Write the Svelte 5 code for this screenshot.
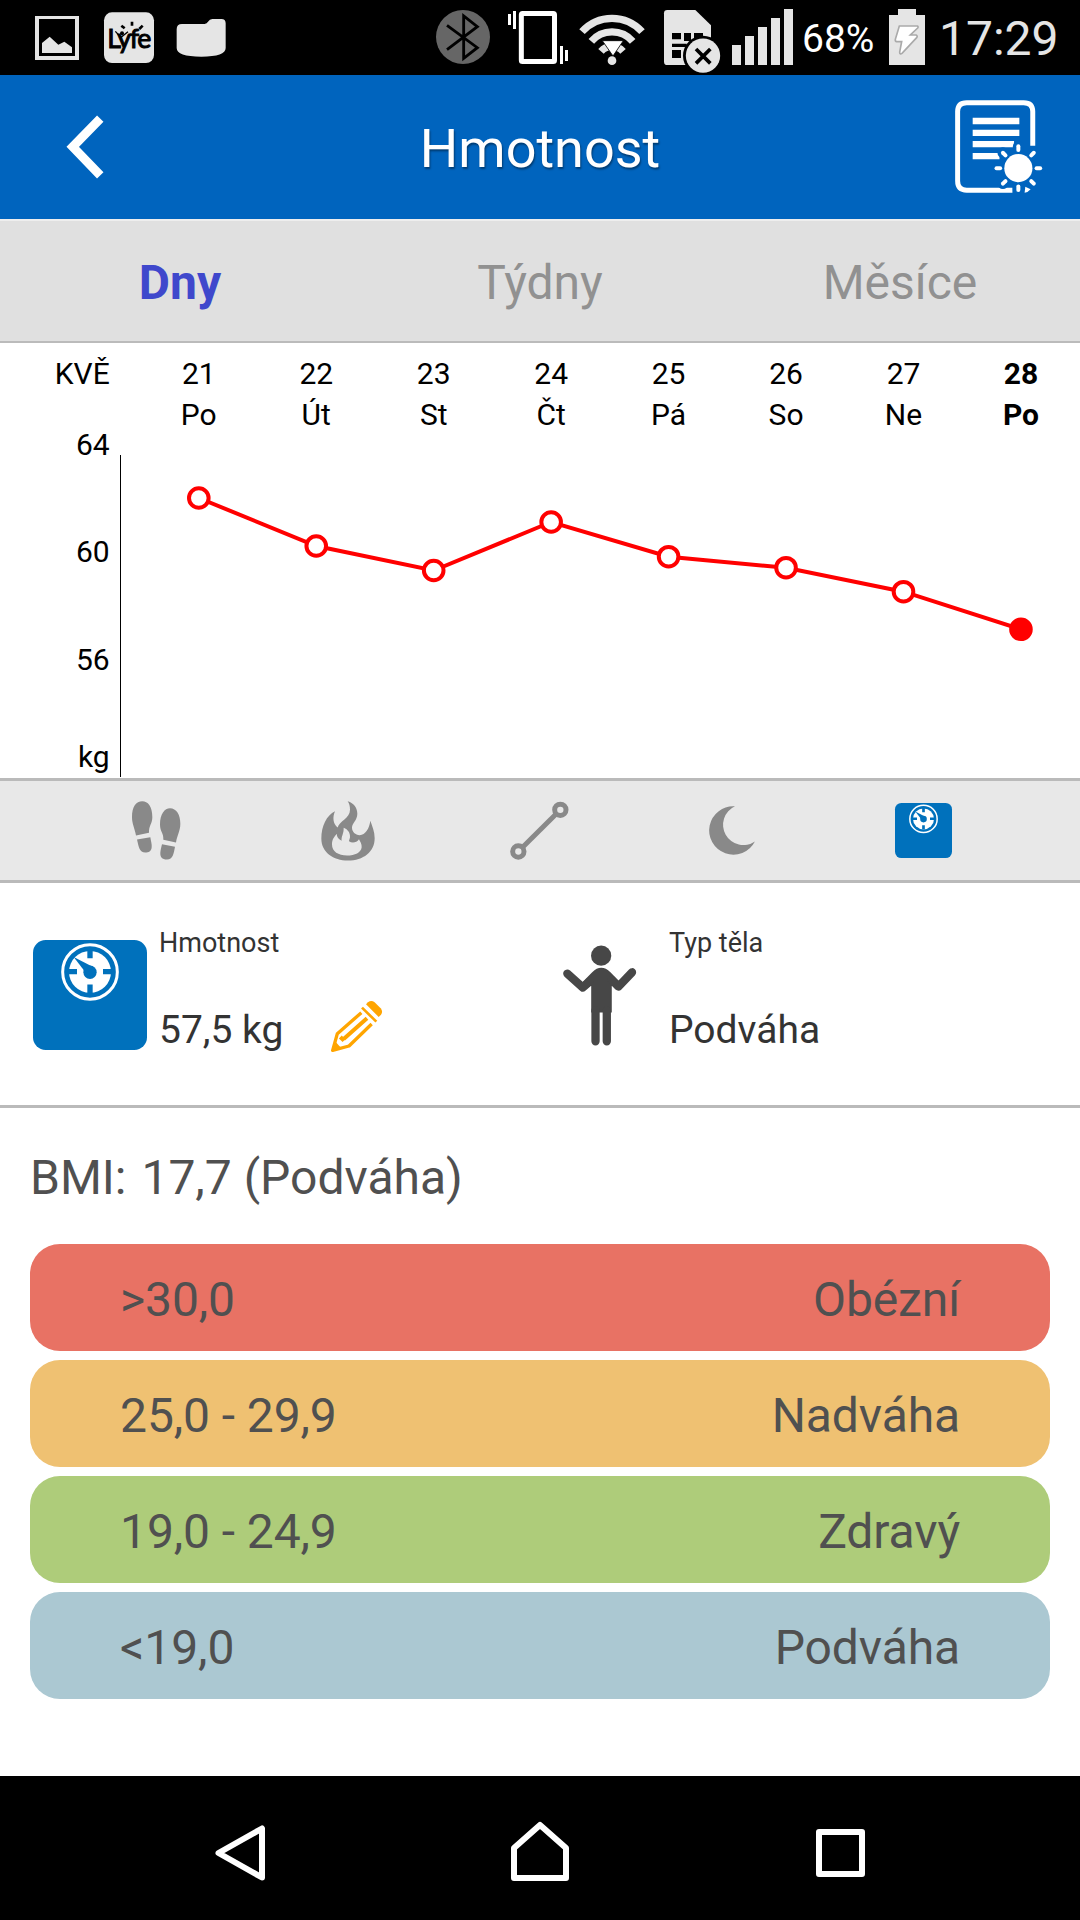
<script>
  const tabs = ['Dny', 'Týdny', 'Měsíce'];
  let activeTab = $state('Dny');

  const days = [
    { num: 21, name: 'Po', y: 155 },
    { num: 22, name: 'Út', y: 203 },
    { num: 23, name: 'St', y: 227.5 },
    { num: 24, name: 'Čt', y: 179 },
    { num: 25, name: 'Pá', y: 213.7 },
    { num: 26, name: 'So', y: 224.7 },
    { num: 27, name: 'Ne', y: 248.7 },
    { num: 28, name: 'Po', y: 286.3 }
  ];

  const axis = [
    { label: 'KVĚ', y: 41 },
    { label: '64', y: 112 },
    { label: '60', y: 219 },
    { label: '56', y: 326.5 },
    { label: 'kg', y: 424 }
  ];

  const ranges = [
    { range: '>30,0', label: 'Obézní', cls: 'obese' },
    { range: '25,0 - 29,9', label: 'Nadváha', cls: 'over' },
    { range: '19,0 - 24,9', label: 'Zdravý', cls: 'healthy' },
    { range: '<19,0', label: 'Podváha', cls: 'under' }
  ];

  const dayX = (i) => 198.8 + i * 117.45;
  const line = days.map((d, i) => `${dayX(i)},${d.y}`).join(' ');
  const rays = [0, 45, 90, 135, 180, 225, 270, 315];
</script>

{#snippet scaleIcon(cls)}
  <svg class={cls} viewBox="0 0 342 331" preserveAspectRatio="none">
    <rect width="342" height="331" rx="38" fill="#0071bc" />
    <circle cx="171" cy="96" r="82" fill="none" stroke="#fff" stroke-width="9" />
    <circle cx="171" cy="96" r="63" fill="#fff" />
    <path d="M171 30V55M171 134V160M106 95H132M210 95H236" stroke="#0071bc" stroke-width="16" />
    <circle cx="171" cy="97" r="20" fill="#0071bc" />
    <path d="M122 51L182 82L160 101Z" fill="#0071bc" />
  </svg>
{/snippet}

<div class="screen">
  <div class="status">
    <svg class="status-left" viewBox="0 0 1260 225">
      <path d="M105 48H237V180H105ZM117 57V168H225V57Z" fill="#e5e5e5" fill-rule="evenodd" />
      <path d="M126 159V129L149 110L175 134L193 125L216 142V159Z" fill="#e5e5e5" />
      <rect x="312" y="37" width="150" height="152" rx="24" fill="#e5e5e5" />
      <text class="brand" x="322" y="143" textLength="132">Lyfe</text>
      <circle cx="366" cy="100" r="6" />
      <path d="M346 94L363 112L384 95" fill="none" stroke="#000" stroke-width="4" />
      <path d="M364 77L374 85M396 65V77M428 77L418 87" stroke="#000" stroke-width="8" />
      <path d="M546 72H614Q621 71 624 65Q629 57 637 57H664Q677 57 677 70V144Q677 170 604 170Q530 170 530 144V88Q530 72 546 72Z" fill="#e5e5e5" />
    </svg>
    <svg class="status-right" viewBox="0 0 1128 225">
      <circle cx="129" cy="111" r="81" fill="#666" />
      <path d="M81 149L172 80L131 48V175L172 143L81 76" fill="none" stroke="#000" stroke-width="8.5" />
      <rect x="304" y="40.500" width="99.500" height="144" rx="4" fill="none" stroke="#fff" stroke-width="15" />
      <path d="M268.500 42V75M283.500 33V87M424.500 138V192M439.500 150V183" stroke="#fff" stroke-width="9" />
      <g fill="none" stroke="#e5e5e5" stroke-width="22">
        <path d="M486 95A121 121 0 0 1 666 95" />
        <path d="M514 124A82 82 0 0 1 638 124" />
        <path d="M543 154A44 44 0 0 1 609 154" />
      </g>
      <path d="M547 122H610L579 168Z" fill="#fff" stroke="#000" stroke-width="2.5" />
      <circle cx="576" cy="182" r="13" fill="#e5e5e5" />
      <path d="M742 30H826L873 76V195H742Q732 195 732 185V40Q732 30 742 30Z" fill="#e5e5e5" />
      <path d="M756 99H783V118H756ZM792 99H813V123H792ZM822 99H849V118H822ZM756 131H800V141H756ZM756 150H783V174H756Z" />
      <circle cx="849" cy="167" r="60" />
      <circle cx="849" cy="167" r="51.500" fill="#e5e5e5" />
      <path d="M828 147L871 190M871 147L828 190" stroke="#000" stroke-width="11" />
      <path d="M936 135H963V195H936ZM975 108H1002V195H975ZM1014 81H1041V195H1014ZM1053 54H1080V195H1053ZM1092 27H1119V195H1092Z" fill="#e5e5e5" />
    </svg>
    <span class="percent">68%</span>
    <svg class="battery" viewBox="507 27 108 168">
      <path d="M534 27H588V45H615V195H507V45H534Z" fill="#e5e5e5" />
      <path d="M538 78H592Q596 80 593 84L571 105H588Q594 108 590 113L546 160Q539 165 539 156L545 125H530Q525 124 526 118Z" fill="#fff" stroke="#aaa" stroke-width="5" />
    </svg>
    <span class="time">17:29</span>
  </div>

  <header>
    <svg class="back" viewBox="200 348 111 187">
      <path d="M300 356L217 441L300 527" fill="none" stroke="#fff" stroke-width="27" />
    </svg>
    <h1>Hmotnost</h1>
    <svg class="report" viewBox="706 300 262 281">
      <path d="M940.500 438V335Q940.500 308 913 308H741Q713.500 308 713.500 335V545Q713.500 572.500 741 572.500H879" fill="none" stroke="#fff" stroke-width="15" />
      <path d="M759 363.500H900M759 399.500H900M759 433.500H884M759 469.500H840" stroke="#fff" stroke-width="19" />
      <path d="M918 562L934 570Q927 579 916 580Z" fill="#fff" />
      {#each rays as r}
        <path d="M897 450V440" transform="rotate({r} 897 506)" class="ray-gap" />
      {/each}
      <circle cx="897" cy="506" r="50" fill="#0064be" />
      {#each rays as r}
        <path d="M897 451V440" transform="rotate({r} 897 506)" class="ray" />
      {/each}
      <circle cx="897" cy="506" r="42.500" fill="#fff" />
    </svg>
  </header>

  <nav class="tabs">
    {#each tabs as tab}
      <button class:active={tab === activeTab} onclick={() => (activeTab = tab)}>{tab}</button>
    {/each}
  </nav>

  <svg class="chart" viewBox="0 0 1080 435">
    {#each axis as a}
      <text x="109.700" y={a.y} text-anchor="end">{a.label}</text>
    {/each}
    <path d="M120.500 112V434" stroke="#000" stroke-width="1" />
    <polyline points={line} fill="none" stroke="#f00" stroke-width="4" />
    {#each days as d, i}
      {@const last = i === days.length - 1}
      <text x={dayX(i)} y="41" text-anchor="middle" class:today={last}>{d.num}</text>
      <text x={dayX(i)} y="82" text-anchor="middle" class:today={last}>{d.name}</text>
      <circle cx={dayX(i)} cy={d.y} r="9.800" fill={last ? '#f00' : '#fff'} stroke="#f00" stroke-width="4" />
    {/each}
  </svg>

  <div class="metrics">
    <div class="metric">
      <svg class="icon" viewBox="78 91.500 180 180">
        <path d="M127 92C143 92 157 106 157 140C157 160 146 165 147 187L108 195C104 172 96 160 96 140C96 108 108 92 127 92Z" />
        <path d="M111 207L151 200C153 213 156 220 155 230C154 242 146 246 136 246C118 246 116 228 111 207Z" />
        <path d="M210 113C229 113 241 132 241 160C241 182 231 196 228 216L190 208C191 186 180 184 180 162C180 130 194 113 210 113Z" />
        <path d="M186 221L225 229C221 250 219 267 201 267C186 267 180 260 181 246C182 236 184 230 186 221Z" />
      </svg>
    </div>
    <div class="metric">
      <svg class="icon" viewBox="654 91.500 180 180">
        <path
          fill-rule="evenodd"
          d="M743 92C762 98 772 112 772 130C772 150 756 158 756 172C756 184 766 194 779 194C796 194 808 174 811 151C817 168 824 184 824 203C824 244 790 270 744 270C700 270 664 246 664 204C664 166 680 134 705 122C697 140 699 160 713 171C718 152 750 144 750 118C750 107 748 99 743 92ZM710 190C710 200 716 207 725 211C723 198 732 190 731 172C744 177 751 188 750 200C749 206 747 208 747 212C757 219 770 216 777 206C780 212 786 220 785 230C783 246 765 255 741 255C715 255 696 243 696 222C696 206 703 200 710 190Z"
        />
      </svg>
    </div>
    <div class="metric">
      <svg class="icon route" viewBox="1230 91.500 180 180">
        <circle cx="1381" cy="118" r="17" />
        <circle cx="1255" cy="243" r="17" />
        <path d="M1369 130L1267 231" />
      </svg>
    </div>
    <div class="metric">
      <svg class="icon" viewBox="702 800.500 60 60">
        <path d="M735 805.800A24.200 24.200 0 1 0 754.900 841A20.300 20.300 0 1 1 735 805.800Z" />
      </svg>
    </div>
    <div class="metric">{@render scaleIcon('scale-small')}</div>
  </div>

  <section class="details">
    <div class="detail">
      {@render scaleIcon('scale-big')}
      <div class="info">
        <span class="label">Hmotnost</span>
        <span class="value">57,5 kg</span>
      </div>
      <svg class="pencil" viewBox="993 363 153 153">
        <path d="M1084 398L1012 461L998 511L1047 498L1115 432" fill="none" stroke="#ffa500" stroke-width="10" stroke-linejoin="round" />
        <path d="M1005 484L1023 503L997 514Z" fill="#ffa500" />
        <path d="M1021 471L1032 482M1031 477L1101 415" stroke="#ffa500" stroke-width="12" />
        <path d="M1086 383L1129 425" stroke="#ffa500" stroke-width="8" />
        <path d="M1098 373L1104 367Q1113 359 1123 366L1142 385Q1150 395 1143 404L1136 411Z" fill="#ffa500" />
      </svg>
    </div>
    <div class="detail body-type">
      <svg class="person" viewBox="100 134 220 302">
        <circle cx="215" cy="165" r="30.500" />
        <path d="M153 250L188 215Q215 188 243 215L275 248L247 256V336H185V256Z" />
        <path d="M113 219L160 261L180 243M308 215L267 258L247 238M198 330V423M232 330V423" />
      </svg>
      <div class="info">
        <span class="label">Typ těla</span>
        <span class="value">Podváha</span>
      </div>
    </div>
  </section>

  <section class="bmi">
    <h2><span class="bmi-name">BMI:</span> 17,7 (Podváha)</h2>
    {#each ranges as r}
      <div class="range {r.cls}">
        <span>{r.range}</span>
        <span>{r.label}</span>
      </div>
    {/each}
  </section>

  <div class="navbar">
    <svg viewBox="210 1818 60 60"><path d="M218.500 1853L262 1828.500V1877.500Z" /></svg>
    <svg viewBox="510 1818 60 60"><path d="M514 1878V1848L540 1825L566 1848V1878Z" /></svg>
    <svg viewBox="810 1818 60 60"><path d="M819 1832H862V1874H819Z" /></svg>
  </div>
</div>

<style>
  :global(body) {
    margin: 0;
    background: #fff;
  }

  .screen {
    width: 1080px;
    height: 1920px;
    display: flex;
    flex-direction: column;
    overflow: hidden;
    background: #fff;
    font-family: Roboto, sans-serif;
  }

  svg {
    display: block;
    flex: none;
    overflow: visible;
  }

  .status {
    height: 75px;
    flex: none;
    display: flex;
    align-items: flex-start;
    background: #000;
  }

  .status-left {
    width: 420px;
    height: 75px;
  }

  .brand {
    font-family: Lato, sans-serif;
    font-size: 80px;
    stroke: #000;
    stroke-width: 3;
  }

  .status-right {
    width: 376px;
    height: 75px;
  }

  .percent {
    width: 93px;
    padding: 16px 0 0 6px;
    box-sizing: border-box;
    font-size: 39px;
    line-height: 46px;
    color: #fff;
  }

  .battery {
    width: 36px;
    height: 56px;
    margin-top: 9px;
  }

  .time {
    padding: 11px 0 0 14px;
    font-size: 48px;
    line-height: 56px;
    color: #e5e5e5;
  }

  header {
    height: 144px;
    flex: none;
    box-sizing: border-box;
    padding: 0 38px 0 67px;
    display: grid;
    grid-template-columns: 100px 1fr 129px;
    align-items: center;
    background: #0064be;
  }

  .back {
    width: 37px;
    height: 62px;
  }

  h1 {
    margin: 0;
    padding-top: 4px;
    text-align: center;
    font-size: 54px;
    font-weight: 400;
    line-height: 64px;
    color: #fff;
    text-shadow: 1px 2px 2px rgba(0, 0, 0, 0.4);
  }

  .report {
    width: 87px;
    height: 93px;
    margin-bottom: 1px;
    justify-self: end;
  }

  .ray-gap {
    stroke: #0064be;
    stroke-width: 33;
    stroke-linecap: round;
  }

  .ray {
    stroke: #fff;
    stroke-width: 12;
    stroke-linecap: round;
  }

  .tabs {
    height: 124px;
    flex: none;
    box-sizing: border-box;
    display: grid;
    grid-template-columns: repeat(3, 1fr);
    border-top: 2px solid #eee;
    border-bottom: 2px solid #bbb;
    background: #e0e0e0;
  }

  .tabs button {
    padding: 3px 0 0;
    border: none;
    background: none;
    font: 48px/56px Roboto, sans-serif;
    color: #919191;
  }

  .tabs button.active {
    font-weight: 700;
    color: #3f48cc;
  }

  .chart {
    width: 1080px;
    height: 435px;
    font-size: 30px;
  }

  .today {
    font-weight: 700;
  }

  .metrics {
    height: 105px;
    flex: none;
    box-sizing: border-box;
    padding: 0 60px;
    display: grid;
    grid-template-columns: repeat(5, 1fr);
    border-top: 3px solid #bababa;
    border-bottom: 3px solid #bababa;
    background: #e8e8e8;
  }

  .metric {
    display: flex;
    align-items: center;
    justify-content: center;
  }

  .icon {
    width: 60px;
    height: 60px;
    fill: #898989;
  }

  .route {
    fill: none;
    stroke: #898989;
    stroke-width: 15;
  }

  .scale-small {
    width: 57px;
    height: 55px;
    margin: 0 1px 1px 0;
  }

  .details {
    height: 225px;
    flex: none;
    box-sizing: border-box;
    display: grid;
    grid-template-columns: 530px 550px;
    border-bottom: 3px solid #bababa;
    color: #333;
  }

  .detail {
    display: flex;
    align-items: flex-start;
    padding-left: 33px;
  }

  .scale-big {
    width: 114px;
    height: 110px;
    margin: 57px 12px 0 0;
  }

  .info {
    padding-top: 44px;
    display: flex;
    flex-direction: column;
    gap: 48px;
  }

  .label {
    font-size: 27px;
    line-height: 32px;
  }

  .value {
    font-size: 39px;
    line-height: 46px;
  }

  .pencil {
    width: 51px;
    height: 51px;
    margin: 118px 0 0 48px;
  }

  .person {
    width: 73px;
    height: 101px;
    margin: 62px 33px 0 0;
    fill: #474747;
  }

  .person path:last-child {
    fill: none;
    stroke: #474747;
    stroke-width: 25;
    stroke-linecap: round;
    stroke-linejoin: round;
  }

  .bmi {
    flex: 1;
    padding: 42px 30px 0;
    color: #505050;
  }

  h2 {
    margin: 0 0 38px;
    font-size: 48px;
    font-weight: 400;
    line-height: 56px;
  }

  .bmi-name {
    margin-right: 3px;
  }

  .range {
    height: 107px;
    margin-bottom: 9px;
    padding: 5px 90px 0;
    box-sizing: border-box;
    display: flex;
    align-items: center;
    justify-content: space-between;
    border-radius: 30px;
    font-size: 48px;
    line-height: 56px;
    letter-spacing: -0.1px;
  }

  .obese {
    background: #e87264;
  }

  .over {
    background: #efc172;
  }

  .healthy {
    background: #aecc7a;
  }

  .under {
    background: #abc8d2;
  }

  .navbar {
    height: 144px;
    flex: none;
    box-sizing: border-box;
    padding: 42px 90px 0;
    display: grid;
    grid-template-columns: repeat(3, 1fr);
    justify-items: center;
    background: #000;
  }

  .navbar svg {
    width: 60px;
    height: 60px;
    fill: none;
    stroke: #fff;
    stroke-width: 6;
    stroke-linejoin: round;
  }
</style>
